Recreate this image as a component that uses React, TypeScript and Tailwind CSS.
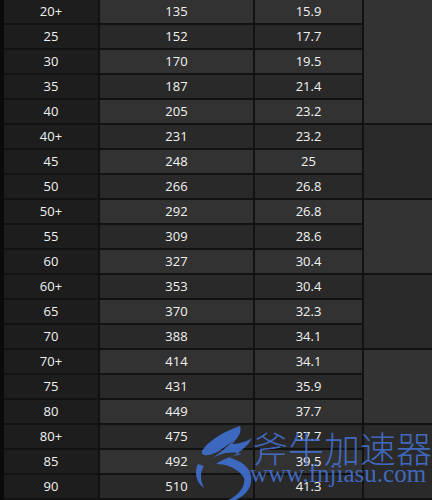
import React from "react";

const rows = [
  ["20+", "135", "15.9"],
  ["25", "152", "17.7"],
  ["30", "170", "19.5"],
  ["35", "187", "21.4"],
  ["40", "205", "23.2"],
  ["40+", "231", "23.2"],
  ["45", "248", "25"],
  ["50", "266", "26.8"],
  ["50+", "292", "26.8"],
  ["55", "309", "28.6"],
  ["60", "327", "30.4"],
  ["60+", "353", "30.4"],
  ["65", "370", "32.3"],
  ["70", "388", "34.1"],
  ["70+", "414", "34.1"],
  ["75", "431", "35.9"],
  ["80", "449", "37.7"],
  ["80+", "475", "37.7"],
  ["85", "492", "39.5"],
  ["90", "510", "41.3"],
];

// merged cells of the last column
const groups = [
  { start: 1, span: "row-span-5", light: true },
  { start: 6, span: "row-span-3", light: false },
  { start: 9, span: "row-span-3", light: true },
  { start: 12, span: "row-span-3", light: false },
  { start: 15, span: "row-span-3", light: true },
  { start: 18, span: "row-span-3", light: false },
];

const rowStarts = [
  "row-start-1", "row-start-2", "row-start-3", "row-start-4", "row-start-5",
  "row-start-6", "row-start-7", "row-start-8", "row-start-9", "row-start-10",
  "row-start-11", "row-start-12", "row-start-13", "row-start-14", "row-start-15",
  "row-start-16", "row-start-17", "row-start-18", "row-start-19", "row-start-20",
];

const Watermark = () => (
  <div className="pointer-events-none absolute left-[186px] top-[424px] flex w-[260px] items-start whitespace-nowrap">
    <svg width="66" height="76" viewBox="0 0 66 76" className="shrink-0 opacity-90">
      <path
        d="M50 2 C38 6 22 14 14 24 C10 29 12 32 18 31 C26 30 34 24 44 16 C36 24 26 32 20 36 C28 30 40 26 52 30 C44 32 34 34 26 40 C36 40 48 44 54 54 C56 62 48 72 38 76 L46 76 C58 70 64 60 60 48 C56 40 48 36 40 34 C50 28 58 22 62 14 C56 18 48 20 42 20 C48 14 52 8 50 2 Z"
        fill="#3f6fd0"
      />
      <path d="M8 40 C4 48 6 58 14 64 C10 56 10 48 14 42 Z" fill="#3f6fd0" />
    </svg>
    <div className="ml-[-4px] flex flex-col">
      <span className="text-[36px] leading-[46px] text-[#4472d2]/90 font-['Noto_Sans_CJK_SC',sans-serif] font-light">
        斧牛加速器
      </span>
      <span className="ml-[-2px] mt-[-10px] text-[25px] leading-[28px] text-[#4472d2]/90 font-['Liberation_Serif',serif]">
        www.fnjiasu.com
      </span>
    </div>
  </div>
);

export default function App() {
  return (
    <div className="relative h-[500px] w-[432px] overflow-hidden bg-[#121212] border-l-4 border-[#0a0a0a] font-['Open_Sans',sans-serif] text-[13px] font-medium text-[#f2f2f2]">
      <div className="grid grid-cols-[94px_153px_107px_1fr] grid-rows-[repeat(20,23px)] gap-x-[2px] gap-y-[2px]">
        {rows.map((r, i) => {
          const light = i % 2 === 0;
          const bg = light ? "bg-[#323232]" : "bg-[#292929]";
          return (
            <React.Fragment key={i}>
              <div className={`col-start-1 ${rowStarts[i]} flex items-center justify-center bg-[#1d1d1d]`}>
                {r[0]}
              </div>
              <div className={`col-start-2 ${rowStarts[i]} flex items-center justify-center ${bg}`}>
                {r[1]}
              </div>
              <div className={`col-start-3 ${rowStarts[i]} flex items-center justify-center ${bg}`}>
                {r[2]}
              </div>
            </React.Fragment>
          );
        })}
        {groups.map((g) => (
          <div
            key={g.start}
            className={`col-start-4 ${rowStarts[g.start - 1]} ${g.span} ${
              g.light ? "bg-[#333333]" : "bg-[#2a2a2a]"
            }`}
          />
        ))}
      </div>
      <Watermark />
    </div>
  );
}
